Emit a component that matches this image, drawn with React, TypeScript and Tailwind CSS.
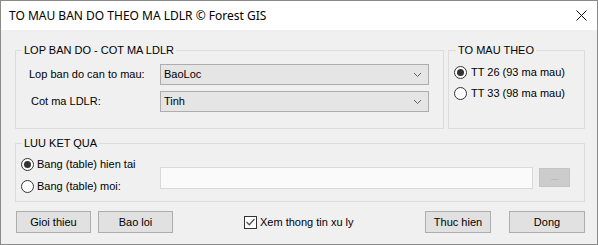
import React from "react";

const Radio = ({ checked }: { checked?: boolean }) => (
  <span className="flex h-[13px] w-[13px] shrink-0 items-center justify-center rounded-full border border-[#333333] bg-white">
    {checked && <span className="h-[7px] w-[7px] rounded-full bg-[#333333]" />}
  </span>
);

const Chevron = () => (
  <svg width="9" height="6" viewBox="0 0 9 6" className="shrink-0">
    <polyline points="1,1 4.5,4.5 8,1" fill="none" stroke="#606060" strokeWidth="1" />
  </svg>
);

const Combo = ({ value }: { value: string }) => (
  <div className="flex h-[21px] w-[269px] items-center justify-between border border-[#adadad] bg-[#e5e5e5] pl-[3px] pr-[6px]">
    <span>{value}</span>
    <Chevron />
  </div>
);

const Btn = ({ label, w }: { label: string; w: string }) => (
  <div className={`flex h-[22px] items-center justify-center border border-[#adadad] bg-[#e1e1e1] ${w}`}>
    {label}
  </div>
);

export default function App() {
  return (
    <div
      className="flex h-[245px] w-[598px] flex-col border border-[#8a8a8a] bg-[#f0f0f0] text-[11px] leading-[13px] text-black"
      style={{ fontFamily: '"Liberation Sans", Arial, sans-serif' }}
    >
      {/* Title bar */}
      <div className="flex h-[29px] shrink-0 items-center justify-between bg-white pl-[8px] pr-[10px]">
        <span className="text-[12px]" style={{ fontFamily: '"Noto Sans", "Liberation Sans", sans-serif' }}>
          TO MAU BAN DO THEO MA LDLR © Forest GIS
        </span>
        <svg width="11" height="11" viewBox="0 0 11 11">
          <line x1="0.5" y1="0.5" x2="10.5" y2="10.5" stroke="#111" strokeWidth="1" />
          <line x1="10.5" y1="0.5" x2="0.5" y2="10.5" stroke="#111" strokeWidth="1" />
        </svg>
      </div>

      {/* Content */}
      <div className="flex flex-1 flex-col pl-[14px] pr-[12px]">
        <div className="mt-[20px] flex gap-[4px]">
          {/* Group 1 */}
          <div className="relative h-[79px] w-[429px] border border-[#dcdcdc]">
            <span className="absolute left-[6px] top-[-7px] bg-[#f0f0f0] px-[2px]">LOP BAN DO - COT MA LDLR</span>
            <div className="flex flex-col gap-[6px] pl-[13px] pt-[13px]">
              <div className="flex items-center">
                <span className="w-[131px]">Lop ban do can to mau:</span>
                <Combo value="BaoLoc" />
              </div>
              <div className="flex items-center">
                <span className="ml-[2px] w-[129px]">Cot ma LDLR:</span>
                <Combo value="Tinh" />
              </div>
            </div>
          </div>
          {/* Group 2 */}
          <div className="relative h-[79px] w-[137px] border border-[#dcdcdc]">
            <span className="absolute left-[7px] top-[-7px] bg-[#f0f0f0] px-[2px]">TO MAU THEO</span>
            <div className="flex flex-col gap-[8px] pl-[5px] pt-[15px]">
              <div className="flex items-center gap-[4px]">
                <Radio checked />
                <span>TT 26 (93 ma mau)</span>
              </div>
              <div className="flex items-center gap-[4px]">
                <Radio />
                <span>TT 33 (98 ma mau)</span>
              </div>
            </div>
          </div>
        </div>

        {/* Group 3 */}
        <div className="relative mt-[14px] flex h-[59px] border border-[#dcdcdc]">
          <span className="absolute left-[6px] top-[-7px] bg-[#f0f0f0] px-[2px]">LUU KET QUA</span>
          <div className="flex w-[144px] flex-col gap-[9px] pl-[5px] pt-[14px]">
            <div className="flex items-center gap-[3px]">
              <Radio checked />
              <span>Bang (table) hien tai</span>
            </div>
            <div className="flex items-center gap-[3px]">
              <Radio />
              <span>Bang (table) moi:</span>
            </div>
          </div>
          <div className="flex items-start pt-[23px]">
            <div className="h-[22px] w-[373px] border border-[#d9d9d9] bg-[#fafafa]" />
            <div className="ml-[6px] mt-[1px] flex h-[19px] w-[31px] items-center justify-center border border-[#c4c4c4] bg-[#cccccc] text-[9px] text-[#a0a0a0]">
              ...
            </div>
          </div>
        </div>

        {/* Bottom buttons */}
        <div className="mt-[9px] flex items-center">
          <div className="ml-[1px]">
            <Btn label="Gioi thieu" w="w-[75px]" />
          </div>
          <div className="ml-[7px]">
            <Btn label="Bao loi" w="w-[75px]" />
          </div>
          <div className="ml-[71px] flex items-center gap-[3px]">
            <span className="flex h-[13px] w-[13px] items-center justify-center border border-[#333333] bg-white">
              <svg width="9" height="8" viewBox="0 0 9 8">
                <polyline points="0.5,4 3.3,6.8 8.5,1" fill="none" stroke="#555" strokeWidth="1.3" />
              </svg>
            </span>
            <span>Xem thong tin xu ly</span>
          </div>
          <div className="ml-auto">
            <Btn label="Thuc hien" w="w-[66px]" />
          </div>
          <div className="ml-[18px]">
            <Btn label="Dong" w="w-[76px]" />
          </div>
        </div>
      </div>
    </div>
  );
}
